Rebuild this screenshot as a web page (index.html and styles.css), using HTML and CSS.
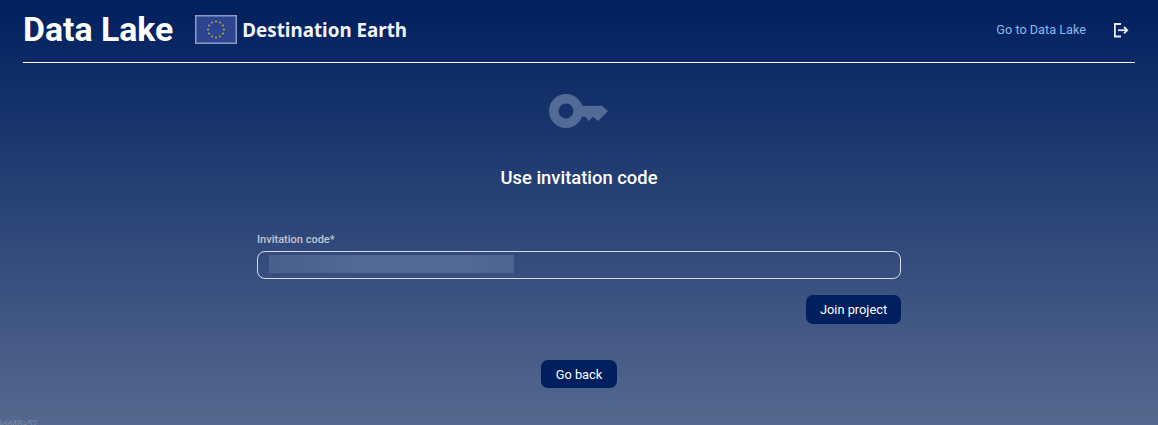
FILE: index.html
```html
<!DOCTYPE html>
<html lang="en">

<head>
    <meta charset="UTF-8">
    <meta name="viewport" content="width=device-width, initial-scale=1.0">
    <title>Data Lake</title>
    <link rel="stylesheet" href="styles.css">
</head>

<body>
    <div class="page">
        <header class="header">
            <div class="brand">
                <div class="app-name">Data Lake</div>
                <div class="logo">
                    <svg class="flag" width="42" height="29" viewBox="0 0 42 29">
                        <rect x="0.75" y="0.75" width="40.500" height="27.500" fill="#2d4491" stroke="#8c9bc4" stroke-width="1.500"/>
                        <g fill="#b5a942">
                            <circle cx="21" cy="6.500" r="1"/>
                            <circle cx="25" cy="7.600" r="1"/>
                            <circle cx="28" cy="10.500" r="1"/>
                            <circle cx="29" cy="14.500" r="1"/>
                            <circle cx="28" cy="18.500" r="1"/>
                            <circle cx="25" cy="21.400" r="1"/>
                            <circle cx="21" cy="22.500" r="1"/>
                            <circle cx="17" cy="21.400" r="1"/>
                            <circle cx="14" cy="18.500" r="1"/>
                            <circle cx="13" cy="14.500" r="1"/>
                            <circle cx="14" cy="10.500" r="1"/>
                            <circle cx="17" cy="7.600" r="1"/>
                        </g>
                    </svg>
                    <span class="logo-text">Destination Earth</span>
                </div>
            </div>
            <nav class="nav">
                <a class="nav-link" href="#">Go to Data Lake</a>
                <svg class="logout" width="16" height="16" viewBox="0 0 16 16" fill="none" stroke="#e8ecf5" stroke-width="1.800">
                    <path d="M8 2H1.900v12.500H8"/>
                    <path d="M5 8.200h9"/>
                    <path d="M11 5 14.200 8.200 11 11.400"/>
                </svg>
            </nav>
        </header>

        <main class="content">
            <svg class="key" width="60" height="34" viewBox="0 0 60 34">
                <circle cx="17" cy="17" r="12.250" fill="none" stroke="#526a96" stroke-width="9.500"/>
                <polygon fill="#526a96" points="28,11.700 53,11.700 59,17 49,27 44,22.700 40,27 36,22.700 28,22.700"/>
            </svg>
            <h1 class="title">Use invitation code</h1>
            <form class="form">
                <label class="label" for="code">Invitation code*</label>
                <div class="input" id="code">
                    <div class="blurred"></div>
                </div>
                <div class="actions">
                    <button class="btn btn-join" type="button">Join project</button>
                </div>
            </form>
            <button class="btn btn-back" type="button">Go back</button>
        </main>

        <div class="version">3dd48a52</div>
    </div>
</body>

</html>
```

FILE: styles.css
```css
* {
    margin: 0;
    padding: 0;
    box-sizing: border-box;
    font-family: Roboto, sans-serif;
}

body {
    overflow: hidden;
}

.page {
    position: relative;
    height: 425px;
    padding: 0 23px;
    background: linear-gradient(180deg, #001f5e 0%, #55698f 100%);
    overflow: hidden;
}

.header {
    height: 63px;
    display: flex;
    align-items: center;
    justify-content: space-between;
    padding-bottom: 3px;
    border-bottom: 1px solid #fff;
}

.brand {
    display: flex;
    align-items: center;
    gap: 22px;
}

.app-name {
    font-size: 33.800px;
    font-weight: 700;
    color: #fff;
}

.logo {
    display: flex;
    align-items: center;
    gap: 5px;
}

.flag {
    display: block;
}

.logo-text {
    font-family: "Noto Sans", sans-serif;
    font-size: 18.800px;
    font-weight: 700;
    color: #f2f4f9;
}

.nav {
    display: flex;
    align-items: center;
    gap: 27px;
    padding-right: 6px;
}

.nav-link {
    font-size: 12.700px;
    color: #8db8ea;
    text-decoration: none;
}

.logout {
    display: block;
}

.content {
    display: flex;
    flex-direction: column;
    align-items: center;
    padding-top: 31px;
}

.key {
    display: block;
}

.title {
    margin-top: 38px;
    font-size: 18.400px;
    line-height: 24px;
    font-weight: 500;
    color: #fff;
}

.form {
    width: 644px;
    margin-top: 43px;
}

.label {
    display: block;
    font-size: 11px;
    line-height: 14px;
    font-weight: 500;
    color: #c0c6d4;
}

.input {
    height: 28px;
    margin-top: 4px;
    padding: 3px 11px;
    border: 1px solid #d5dbe7;
    border-radius: 8px;
}

.blurred {
    width: 245px;
    height: 18px;
    background: linear-gradient(90deg, #47608c 0%, #526b95 40%, #526b95 75%, #4d6690 100%);
}

.actions {
    display: flex;
    justify-content: flex-end;
    margin-top: 16px;
}

.btn {
    height: 28px;
    border: none;
    border-radius: 7px;
    background-color: #001f5e;
    color: #fff;
    font-size: 12.800px;
    font-weight: 400;
    cursor: pointer;
}

.btn-join {
    width: 95px;
    height: 29px;
}

.btn-back {
    width: 76px;
    margin-top: 36px;
}

.version {
    position: absolute;
    left: -3px;
    bottom: -4px;
    font-size: 9px;
    color: #7f8ba5;
}
```
